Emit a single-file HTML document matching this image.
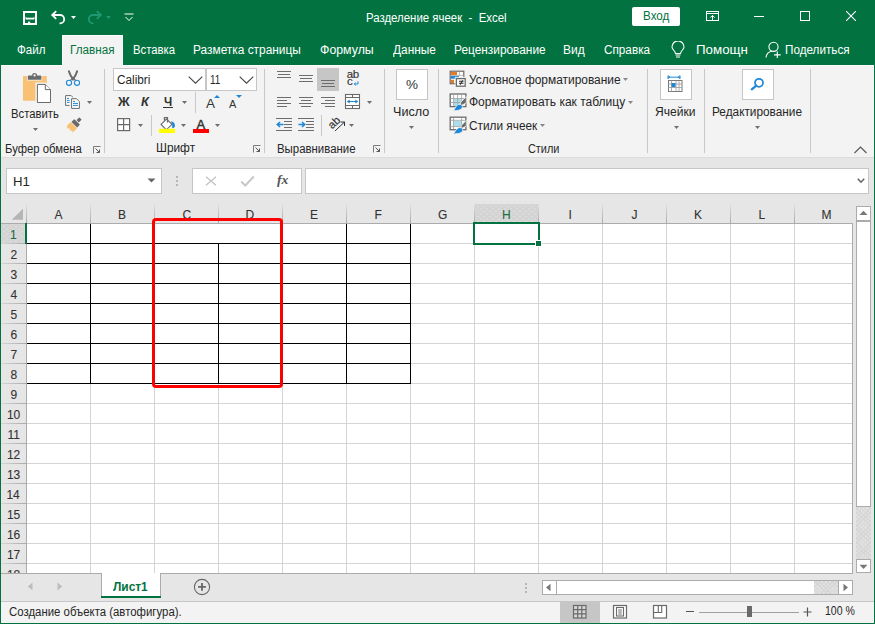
<!DOCTYPE html>
<html><head><meta charset="utf-8"><style>
html,body{margin:0;padding:0;width:875px;height:624px;overflow:hidden;position:relative;font-family:"Liberation Sans",sans-serif;}
body>div,body>span{position:absolute;}
.t{position:absolute;white-space:pre;}
</style></head><body>
<div style="left:0px;top:0px;width:875px;height:624px;background:#027340"></div>
<div style="left:1px;top:65px;width:873px;height:92px;background:#f3f3f3;border-top:1px solid #fcfcfc;box-sizing:border-box"></div>
<div style="left:1px;top:157px;width:873px;height:1px;background:#dcdcdc"></div>
<div style="left:62px;top:35px;width:61px;height:31px;background:#f3f3f3;border-top:1px solid #fcfcfc;border-left:1px solid #fcfcfc;border-right:1px solid #f8f8f8;box-sizing:border-box"></div>
<span class="t" style="left:366.05px;top:11.84px;font-size:12px;line-height:12px;color:#fff;font-weight:400;transform:scaleX(0.9521);transform-origin:0 0;">Разделение ячеек&nbsp; -&nbsp; Excel</span>
<span class="t" style="left:16.50px;top:43.84px;font-size:12px;line-height:12px;color:#fff;font-weight:400;transform:scaleX(0.9621);transform-origin:0 0;">Файл</span>
<span class="t" style="left:132.56px;top:43.84px;font-size:12px;line-height:12px;color:#fff;font-weight:400;transform:scaleX(0.9432);transform-origin:0 0;">Вставка</span>
<span class="t" style="left:193.01px;top:43.84px;font-size:12px;line-height:12px;color:#fff;font-weight:400;transform:scaleX(0.9907);transform-origin:0 0;">Разметка страницы</span>
<span class="t" style="left:320.00px;top:43.84px;font-size:12px;line-height:12px;color:#fff;font-weight:400;transform:scaleX(1.0288);transform-origin:0 0;">Формулы</span>
<span class="t" style="left:392.50px;top:43.84px;font-size:12px;line-height:12px;color:#fff;font-weight:400;transform:scaleX(0.9884);transform-origin:0 0;">Данные</span>
<span class="t" style="left:454.01px;top:43.84px;font-size:12px;line-height:12px;color:#fff;font-weight:400;transform:scaleX(0.9891);transform-origin:0 0;">Рецензирование</span>
<span class="t" style="left:563.00px;top:43.84px;font-size:12px;line-height:12px;color:#fff;font-weight:400;transform:scaleX(1.0000);transform-origin:0 0;">Вид</span>
<span class="t" style="left:604.00px;top:43.84px;font-size:12px;line-height:12px;color:#fff;font-weight:400;transform:scaleX(0.9787);transform-origin:0 0;">Справка</span>
<span class="t" style="left:695.89px;top:43.84px;font-size:12px;line-height:12px;color:#fff;font-weight:400;transform:scaleX(1.1111);transform-origin:0 0;">Помощн</span>
<span class="t" style="left:784.62px;top:43.84px;font-size:12px;line-height:12px;color:#fff;font-weight:400;transform:scaleX(0.9754);transform-origin:0 0;">Поделиться</span>
<span class="t" style="left:69.62px;top:43.84px;font-size:12px;line-height:12px;color:#027340;font-weight:400;transform:scaleX(0.9750);transform-origin:0 0;">Главная</span>
<svg style="position:absolute;left:23px;top:11px" width="14" height="14" viewBox="0 0 14 14"><path d="M1 1H13V13H1Z" fill="none" stroke="#fff" stroke-width="2"/><path d="M2.5 7.6H11.5" stroke="#fff" stroke-width="1.8"/><path d="M2.6 6.3L3.6 7M11.4 6.3L10.4 7" stroke="#fff" stroke-width="1"/><rect x="5" y="10.6" width="2.2" height="2.4" fill="#fff"/></svg>
<svg style="position:absolute;left:50px;top:9px" width="18" height="17" viewBox="0 0 18 17"><path d="M3 6 H10 A4.2 4.2 0 0 1 10 14.4 H9.5" fill="none" stroke="#fff" stroke-width="1.8"/><path d="M6.2 2.2 L2.2 6 L6.2 9.8" fill="none" stroke="#fff" stroke-width="1.8"/></svg>
<svg style="position:absolute;left:71px;top:16px" width="5" height="3" viewBox="0 0 5 3"><path d="M0 0H5L2.5 3Z" fill="#fff"/></svg>
<svg style="position:absolute;left:85px;top:9px" width="18" height="17" viewBox="0 0 18 17"><path d="M15 6 H8 A4.2 4.2 0 0 0 8 14.4 H8.5" fill="none" stroke="#1f9872" stroke-width="1.8"/><path d="M11.8 2.2 L15.8 6 L11.8 9.8" fill="none" stroke="#1f9872" stroke-width="1.8"/></svg>
<svg style="position:absolute;left:106px;top:16px" width="5" height="3" viewBox="0 0 5 3"><path d="M0 0H5L2.5 3Z" fill="#1f9872"/></svg>
<svg style="position:absolute;left:124px;top:13px" width="10" height="9" viewBox="0 0 10 9"><path d="M0.5 1H9.5" stroke="#fff" stroke-width="1"/><path d="M1.5 4 L5 7.5 L8.5 4" fill="none" stroke="#fff" stroke-width="1"/></svg>
<div style="left:632px;top:7px;width:48px;height:19px;background:#fff;border-radius:2px"></div>
<span class="t" style="left:642.63px;top:9.84px;font-size:12px;line-height:12px;color:#027340;font-weight:400;transform:scaleX(0.9692);transform-origin:0 0;">Вход</span>
<svg style="position:absolute;left:705px;top:10px" width="15" height="12" viewBox="0 0 15 12"><rect x="1.5" y="1.5" width="12" height="9" fill="none" stroke="#fff" stroke-width="1"/><path d="M1.5 3.5H13.5" stroke="#fff" stroke-width="1"/><path d="M7.5 10V5.5M5.3 7.6L7.5 5.4L9.7 7.6" fill="none" stroke="#fff" stroke-width="1"/></svg>
<div style="left:754px;top:16px;width:10px;height:1px;background:#fff"></div>
<svg style="position:absolute;left:800px;top:11px" width="10" height="10" viewBox="0 0 10 10"><rect x="0.5" y="0.5" width="9" height="9" fill="none" stroke="#fff" stroke-width="1"/></svg>
<svg style="position:absolute;left:846px;top:11px" width="10" height="10" viewBox="0 0 10 10"><path d="M0 0L10 10M10 0L0 10" stroke="#fff" stroke-width="1.1"/></svg>
<svg style="position:absolute;left:670px;top:41px" width="16" height="18" viewBox="0 0 16 18"><path d="M5.5 12.5 C5.5 10 2 8.5 2 6 A6 6 0 0 1 14 6 C14 8.5 10.5 10 10.5 12.5 Z" fill="none" stroke="#fff" stroke-width="1.1"/><path d="M5.5 14H10.5M6 16H10" stroke="#fff" stroke-width="1.1"/></svg>
<svg style="position:absolute;left:765px;top:41px" width="17" height="18" viewBox="0 0 17 18"><circle cx="8.5" cy="5.8" r="4.6" fill="none" stroke="#fff" stroke-width="1.1"/><path d="M1 16.5 C1.5 12.5 4 10.5 7 10.2" fill="none" stroke="#fff" stroke-width="1.1"/><path d="M12.3 10.5V17M9 13.8H15.7" stroke="#fff" stroke-width="1.2"/></svg>
<div style="left:104px;top:69px;width:1px;height:84px;background:#c8c8c8"></div>
<div style="left:264px;top:69px;width:1px;height:84px;background:#c8c8c8"></div>
<div style="left:384px;top:69px;width:1px;height:84px;background:#c8c8c8"></div>
<div style="left:438px;top:69px;width:1px;height:84px;background:#c8c8c8"></div>
<div style="left:647px;top:69px;width:1px;height:84px;background:#c8c8c8"></div>
<div style="left:704px;top:69px;width:1px;height:84px;background:#c8c8c8"></div>
<div style="left:810px;top:69px;width:1px;height:84px;background:#c8c8c8"></div>
<span class="t" style="left:5.46px;top:142.84px;font-size:12px;line-height:12px;color:#262626;font-weight:400;transform:scaleX(0.9407);transform-origin:0 0;">Буфер обмена</span>
<svg style="position:absolute;left:93px;top:146px" width="8" height="8" viewBox="0 0 8 8"><path d="M0.5 7.5V0.5H7.5" fill="none" stroke="#7a7a7a" stroke-width="1"/><path d="M2.5 2.5L6.5 6.5M3.5 6.5H6.5V3.5" fill="none" stroke="#555" stroke-width="1"/></svg>
<span class="t" style="left:156.01px;top:142.44px;font-size:12px;line-height:12px;color:#262626;font-weight:400;transform:scaleX(0.9897);transform-origin:0 0;">Шрифт</span>
<svg style="position:absolute;left:253px;top:145px" width="8" height="8" viewBox="0 0 8 8"><path d="M0.5 7.5V0.5H7.5" fill="none" stroke="#7a7a7a" stroke-width="1"/><path d="M2.5 2.5L6.5 6.5M3.5 6.5H6.5V3.5" fill="none" stroke="#555" stroke-width="1"/></svg>
<span class="t" style="left:276.65px;top:142.64px;font-size:12px;line-height:12px;color:#262626;font-weight:400;transform:scaleX(0.9500);transform-origin:0 0;">Выравнивание</span>
<svg style="position:absolute;left:373px;top:145px" width="8" height="8" viewBox="0 0 8 8"><path d="M0.5 7.5V0.5H7.5" fill="none" stroke="#7a7a7a" stroke-width="1"/><path d="M2.5 2.5L6.5 6.5M3.5 6.5H6.5V3.5" fill="none" stroke="#555" stroke-width="1"/></svg>
<span class="t" style="left:527.70px;top:142.74px;font-size:12px;line-height:12px;color:#262626;font-weight:400;transform:scaleX(0.9059);transform-origin:0 0;">Стили</span>
<svg style="position:absolute;left:854px;top:146px" width="13" height="8" viewBox="0 0 13 8"><path d="M0.5 7L6.5 1L12.5 7" fill="none" stroke="#555" stroke-width="1.1"/></svg>
<svg style="position:absolute;left:18px;top:68px" width="40" height="40" viewBox="0 0 40 40"><rect x="5" y="8" width="23.8" height="24.7" fill="#f8c173"/><path d="M9.8 11.8V8.4Q9.8 7.6 10.6 7.6H14.2V6.6Q14.2 5 16.6 5Q19 5 19 6.6V7.6H22.6Q23.4 7.6 23.4 8.4V11.8Z" fill="#6a6a6a" stroke="#f8f8f8" stroke-width="1.6" paint-order="stroke"/><circle cx="16.6" cy="7.4" r="1.1" fill="#fff"/><path d="M18.4 15.4H27.5L33.5 21.3V35.5H18.4Z" fill="#fff" stroke="#f3f3f3" stroke-width="2"/><path d="M19.4 16.4H27.3L32.5 21.6V34.5H19.4Z" fill="#fff" stroke="#6a6a6a" stroke-width="1"/><path d="M27.3 16.4V21.6H32.5" fill="#fff" stroke="#6a6a6a" stroke-width="1"/></svg>
<span class="t" style="left:10.86px;top:107.54px;font-size:12px;line-height:12px;color:#262626;font-weight:400;transform:scaleX(0.9400);transform-origin:0 0;">Вставить</span>
<svg style="position:absolute;left:33px;top:128px" width="5" height="3" viewBox="0 0 5 3"><path d="M0 0H5L2.5 3Z" fill="#6e6e6e"/></svg>
<svg style="position:absolute;left:62px;top:68px" width="18" height="20" viewBox="0 0 18 20"><path d="M6.9 3.3Q8 7.5 11.3 11.4M15.1 3.3Q14 7.5 10.7 11.4" fill="none" stroke="#6a6a6a" stroke-width="2" stroke-linecap="round"/><path d="M8.3 12.6L10.6 9.8M13.7 12.6L11.4 9.8" stroke="#6a6a6a" stroke-width="1.2"/><circle cx="7" cy="14.8" r="2.6" fill="none" stroke="#1e88d6" stroke-width="1.1"/><circle cx="15" cy="14.8" r="2.6" fill="none" stroke="#1e88d6" stroke-width="1.1"/></svg>
<svg style="position:absolute;left:62px;top:92px" width="20" height="20" viewBox="0 0 20 20"><path d="M3.6 3.6H9.2L10.6 5V13.4H3.6Z" fill="#fff" stroke="#6a6a6a" stroke-width="1"/><path d="M5 6.4H7M5 8.4H8M5 10.4H8" stroke="#1e88d6" stroke-width="1"/><path d="M8.6 6.2H14.5L17.5 9.2V16.5H8.6Z" fill="#fff" stroke="#f3f3f3" stroke-width="2"/><path d="M9.6 6.7H14.5L17.4 9.6V16.4H9.6Z" fill="#fff" stroke="#6a6a6a" stroke-width="1"/><path d="M11 9.4H13M11 11.4H16M11 13.4H16" stroke="#1e88d6" stroke-width="1"/></svg>
<svg style="position:absolute;left:87px;top:101px" width="5" height="3" viewBox="0 0 5 3"><path d="M0 0H5L2.5 3Z" fill="#6e6e6e"/></svg>
<svg style="position:absolute;left:62px;top:113px" width="24" height="24" viewBox="0 0 24 24"><g transform="rotate(45 12 12)"><rect x="10.3" y="2.8" width="3.4" height="4" rx="0.6" fill="#6a6a6a"/><rect x="8" y="7.6" width="8" height="4" rx="0.5" fill="#6a6a6a"/><path d="M7.6 12.2H16.4V18.6L14.8 17.2L13.2 19L11.5 17.4L9.8 19.2L7.6 17.6Z" fill="#f8c173"/></g></svg>
<div style="left:113px;top:68px;width:93px;height:23px;background:#fff;border:1px solid #c6c6c6;box-sizing:border-box"></div>
<div style="left:206px;top:68px;width:51px;height:23px;background:#fff;border:1px solid #c6c6c6;box-sizing:border-box"></div>
<span class="t" style="left:116.50px;top:74.22px;font-size:12.5px;line-height:12.5px;color:#262626;font-weight:400;transform:scaleX(0.9429);transform-origin:0 0;">Calibri</span>
<span class="t" style="left:209.71px;top:74.22px;font-size:12.5px;line-height:12.5px;color:#262626;font-weight:400;transform:scaleX(0.7917);transform-origin:0 0;">11</span>
<svg style="position:absolute;left:188px;top:76px" width="15" height="8" viewBox="0 0 15 8"><path d="M0.7 0.7L7.5 7.2L14.3 0.7" fill="none" stroke="#444" stroke-width="1.1"/></svg>
<svg style="position:absolute;left:239px;top:76px" width="15" height="8" viewBox="0 0 15 8"><path d="M0.7 0.7L7.5 7.2L14.3 0.7" fill="none" stroke="#444" stroke-width="1.1"/></svg>
<span class="t" style="left:118.00px;top:95.84px;font-size:12px;line-height:12px;color:#333;font-weight:700;transform:scaleX(1.0727);transform-origin:0 0;">Ж</span>
<span class="t" style="left:141.00px;top:95.84px;font-size:12px;line-height:12px;color:#333;font-weight:700;transform:scaleX(1.0625);transform-origin:0 0;font-style:italic">К</span>
<span class="t" style="left:163.60px;top:95.84px;font-size:12px;line-height:12px;color:#333;font-weight:700;transform:scaleX(0.9750);transform-origin:0 0;">Ч</span>
<div style="left:163px;top:107px;width:10px;height:1px;background:#333"></div>
<svg style="position:absolute;left:182px;top:101px" width="5" height="3" viewBox="0 0 5 3"><path d="M0 0H5L2.5 3Z" fill="#6e6e6e"/></svg>
<div style="left:195px;top:92px;width:1px;height:21px;background:#c8c8c8"></div>
<span class="t" style="left:206.00px;top:96.57px;font-size:13.5px;line-height:13.5px;color:#333;font-weight:400;">A</span>
<svg style="position:absolute;left:213.5px;top:95px" width="6" height="3" viewBox="0 0 6 3"><path d="M0 3H6L3 0Z" fill="#1e88d6"/></svg>
<span class="t" style="left:229.00px;top:98.69px;font-size:11px;line-height:11px;color:#333;font-weight:400;">A</span>
<svg style="position:absolute;left:235.5px;top:95px" width="6" height="3" viewBox="0 0 6 3"><path d="M0 0H6L3 3Z" fill="#1e88d6"/></svg>
<svg style="position:absolute;left:117px;top:118px" width="14" height="14" viewBox="0 0 14 14"><rect x="0.6" y="0.6" width="12" height="12" fill="#fff" stroke="#6a6a6a" stroke-width="1.2"/><path d="M6.6 0.6V12.6M0.6 6.6H12.6" stroke="#6a6a6a" stroke-width="1.2"/></svg>
<svg style="position:absolute;left:138px;top:124px" width="5" height="3" viewBox="0 0 5 3"><path d="M0 0H5L2.5 3Z" fill="#6e6e6e"/></svg>
<div style="left:151px;top:115px;width:1px;height:21px;background:#c8c8c8"></div>
<svg style="position:absolute;left:156px;top:114px" width="24" height="22" viewBox="0 0 24 22"><path d="M5.1 10.4L10.5 5L16 10.3L10.3 15.8Z" fill="#fff" stroke="#6a6a6a" stroke-width="1.1"/><path d="M8.4 6.5V3.6H11.5V8.5" fill="none" stroke="#6a6a6a" stroke-width="1.2"/><path d="M15 7.2C17.6 7.6 19.4 9.6 18.9 12.2C18.5 14 16.8 14.7 16.2 13.4C15.9 12.3 16.6 11.2 16.2 10.3Z" fill="#1e88d6"/><rect x="3" y="14.8" width="16" height="4.2" fill="#ffff00"/></svg>
<svg style="position:absolute;left:181px;top:124px" width="5" height="3" viewBox="0 0 5 3"><path d="M0 0H5L2.5 3Z" fill="#6e6e6e"/></svg>
<span class="t" style="left:196.50px;top:117.80px;font-size:13px;line-height:13px;color:#333;font-weight:400;-webkit-text-stroke:0.45px currentColor">A</span>
<div style="left:193px;top:129px;width:16px;height:4px;background:#ff0000"></div>
<svg style="position:absolute;left:215px;top:124px" width="5" height="3" viewBox="0 0 5 3"><path d="M0 0H5L2.5 3Z" fill="#6e6e6e"/></svg>
<div style="left:317px;top:68px;width:22px;height:23px;background:#c6c6c6"></div>
<div style="left:277px;top:71px;width:14px;height:1px;background:#6d6d6d"></div>
<div style="left:278px;top:74px;width:12px;height:1px;background:#6d6d6d"></div>
<div style="left:277px;top:77px;width:14px;height:1px;background:#6d6d6d"></div>
<div style="left:299px;top:75px;width:14px;height:1px;background:#6d6d6d"></div>
<div style="left:300px;top:78px;width:12px;height:1px;background:#6d6d6d"></div>
<div style="left:299px;top:81px;width:14px;height:1px;background:#6d6d6d"></div>
<div style="left:321px;top:80px;width:14px;height:1px;background:#6d6d6d"></div>
<div style="left:322px;top:83px;width:12px;height:1px;background:#6d6d6d"></div>
<div style="left:321px;top:86px;width:14px;height:1px;background:#6d6d6d"></div>
<div style="left:277px;top:97px;width:14px;height:1px;background:#6d6d6d"></div>
<div style="left:277px;top:100px;width:10px;height:1px;background:#6d6d6d"></div>
<div style="left:277px;top:103px;width:14px;height:1px;background:#6d6d6d"></div>
<div style="left:277px;top:106px;width:10px;height:1px;background:#6d6d6d"></div>
<div style="left:299px;top:97px;width:14px;height:1px;background:#6d6d6d"></div>
<div style="left:301px;top:100px;width:10px;height:1px;background:#6d6d6d"></div>
<div style="left:299px;top:103px;width:14px;height:1px;background:#6d6d6d"></div>
<div style="left:301px;top:106px;width:10px;height:1px;background:#6d6d6d"></div>
<div style="left:321px;top:97px;width:14px;height:1px;background:#6d6d6d"></div>
<div style="left:325px;top:100px;width:10px;height:1px;background:#6d6d6d"></div>
<div style="left:321px;top:103px;width:14px;height:1px;background:#6d6d6d"></div>
<div style="left:325px;top:106px;width:10px;height:1px;background:#6d6d6d"></div>
<span class="t" style="left:346.70px;top:69.47px;font-size:11.5px;line-height:11.5px;color:#333;font-weight:400;letter-spacing:-0.3px;-webkit-text-stroke:0.15px currentColor">ab</span>
<span class="t" style="left:347.00px;top:76.27px;font-size:11.5px;line-height:11.5px;color:#333;font-weight:400;-webkit-text-stroke:0.15px currentColor">c</span>
<svg style="position:absolute;left:353px;top:81px" width="6" height="5" viewBox="0 0 6 5"><path d="M5 0.3V3H1.5M2.8 1.6L1.2 3L2.8 4.4" fill="none" stroke="#1e88d6" stroke-width="1"/></svg>
<svg style="position:absolute;left:344px;top:93px" width="17" height="17" viewBox="0 0 17 17"><rect x="1.5" y="1.5" width="14" height="14" fill="#fff" stroke="#6a6a6a" stroke-width="1.1"/><path d="M1.5 4.5H15.5M1.5 12.5H15.5M8.5 1.5V4.5M8.5 12.5V15.5" stroke="#6a6a6a" stroke-width="1.1"/><path d="M3.5 8.5H13.5" stroke="#1e88d6" stroke-width="1"/><path d="M3.2 8.5L5.4 7V10ZM13.8 8.5L11.6 7V10Z" fill="#1e88d6" stroke="#1e88d6" stroke-width="0.6"/></svg>
<svg style="position:absolute;left:367px;top:101px" width="5" height="3" viewBox="0 0 5 3"><path d="M0 0H5L2.5 3Z" fill="#6e6e6e"/></svg>
<div style="left:276px;top:118px;width:16px;height:1px;background:#6d6d6d"></div>
<div style="left:284px;top:121px;width:8px;height:1px;background:#6d6d6d"></div>
<div style="left:284px;top:124px;width:8px;height:1px;background:#6d6d6d"></div>
<div style="left:284px;top:127px;width:8px;height:1px;background:#6d6d6d"></div>
<div style="left:276px;top:130px;width:16px;height:1px;background:#6d6d6d"></div>
<svg style="position:absolute;left:276px;top:121px" width="8" height="7" viewBox="0 0 8 7"><path d="M7.5 3.5H1.5M4 1L1.3 3.5L4 6" fill="none" stroke="#1e88d6" stroke-width="1.6"/></svg>
<div style="left:298px;top:118px;width:16px;height:1px;background:#6d6d6d"></div>
<div style="left:306px;top:121px;width:8px;height:1px;background:#6d6d6d"></div>
<div style="left:306px;top:124px;width:8px;height:1px;background:#6d6d6d"></div>
<div style="left:306px;top:127px;width:8px;height:1px;background:#6d6d6d"></div>
<div style="left:298px;top:130px;width:16px;height:1px;background:#6d6d6d"></div>
<svg style="position:absolute;left:298px;top:121px" width="8" height="7" viewBox="0 0 8 7"><path d="M0.5 3.5H6.5M4 1L6.7 3.5L4 6" fill="none" stroke="#1e88d6" stroke-width="1.6"/></svg>
<div style="left:321px;top:115px;width:1px;height:21px;background:#c8c8c8"></div>
<span class="t" style="left:327.5px;top:113px;font-size:11px;line-height:12px;color:#333;-webkit-text-stroke:0.2px #333;transform:rotate(-45deg);transform-origin:10px 8px">ab</span>
<svg style="position:absolute;left:334px;top:121px" width="12" height="11" viewBox="0 0 12 11"><path d="M1 10L10.5 1M6.5 1H10.5V5" fill="none" stroke="#333" stroke-width="1"/></svg>
<svg style="position:absolute;left:349px;top:124px" width="5" height="3" viewBox="0 0 5 3"><path d="M0 0H5L2.5 3Z" fill="#6e6e6e"/></svg>
<div style="left:396px;top:69px;width:32px;height:31px;background:#fff;border:1px solid #c6c6c6;box-sizing:border-box"></div>
<span class="t" style="left:406.00px;top:78.27px;font-size:13.5px;line-height:13.5px;color:#333;font-weight:400;">%</span>
<span class="t" style="left:393.35px;top:105.64px;font-size:12px;line-height:12px;color:#262626;font-weight:400;transform:scaleX(1.0485);transform-origin:0 0;">Число</span>
<svg style="position:absolute;left:409px;top:126px" width="5" height="3" viewBox="0 0 5 3"><path d="M0 0H5L2.5 3Z" fill="#6e6e6e"/></svg>
<svg style="position:absolute;left:449px;top:70px" width="18" height="18" viewBox="0 0 18 18"><rect x="1.2" y="1.2" width="13.6" height="12.5" fill="#fff" stroke="#6a6a6a" stroke-width="1.2"/><rect x="1.8" y="1.8" width="6.2" height="3.2" fill="#e07b27"/><path d="M1.8 6H10.2L9 8.8H1.8Z" fill="#1e88d6"/><rect x="1.8" y="9.8" width="3.2" height="3.4" fill="#e07b27"/><path d="M10.4 1.8V5.4M1.8 5.4H14.2" stroke="#b0b0b0" stroke-width="0.9"/><rect x="6.3" y="7.4" width="11" height="10" fill="none" stroke="#f3f3f3" stroke-width="1"/><rect x="7.4" y="8.6" width="8.8" height="7.6" fill="#fff" stroke="#6a6a6a" stroke-width="1.3"/><path d="M10 11.3H14.6M10 13.3H14.6M13.8 10.2L11.1 14.6" stroke="#333" stroke-width="1.1"/></svg>
<svg style="position:absolute;left:449px;top:92px" width="20" height="21" viewBox="0 0 20 21"><rect x="1.2" y="2" width="15.7" height="12.6" fill="#fff" stroke="#6a6a6a" stroke-width="1.3"/><rect x="5" y="6.9" width="7.2" height="7.2" fill="#a9dfe9"/><path d="M4.6 2.6V14M8.6 2.6V14M12.7 2.6V14M1.8 6.5H16.3M1.8 10.5H16.3" stroke="#a6a6a6" stroke-width="0.9"/><path d="M17.3 4.6L17.3 10.8L11.2 14.2L11.8 10.2Z" fill="#6a6a6a" stroke="#f3f3f3" stroke-width="0.8"/><path d="M4.6 18.6L7.6 13.6Q10 11.4 12.2 12.6Q14.3 14 13 16.6Q10.6 18.8 5 18.8Z" fill="#1e88d6" stroke="#f3f3f3" stroke-width="0.8"/></svg>
<svg style="position:absolute;left:449px;top:114px" width="20" height="21" viewBox="0 0 20 21"><rect x="1.2" y="3.2" width="15.7" height="12.5" fill="#fff" stroke="#6a6a6a" stroke-width="1.3"/><rect x="4.9" y="6.8" width="7.3" height="5.4" fill="#a9dfe9"/><path d="M4.5 3.8V15M12.6 3.8V15M1.8 6.3H16.3M1.8 12.6H16.3" stroke="#a6a6a6" stroke-width="0.9"/><path d="M17.3 6.3L17.3 12L12.3 14.6L12.3 11.4Z" fill="#6a6a6a" stroke="#f3f3f3" stroke-width="0.8"/><path d="M4.6 19.6L7.8 15Q10.2 12.6 12.6 13.8Q14.6 15.2 13.2 18Q10.8 19.9 5 19.9Z" fill="#1e88d6" stroke="#f3f3f3" stroke-width="0.8"/></svg>
<span class="t" style="left:468.90px;top:74.04px;font-size:12px;line-height:12px;color:#262626;font-weight:400;transform:scaleX(0.9928);transform-origin:0 0;">Условное форматирование</span>
<span class="t" style="left:469.00px;top:96.04px;font-size:12px;line-height:12px;color:#262626;font-weight:400;transform:scaleX(1.0000);transform-origin:0 0;">Форматировать как таблицу</span>
<span class="t" style="left:469.00px;top:119.64px;font-size:12px;line-height:12px;color:#262626;font-weight:400;transform:scaleX(0.9855);transform-origin:0 0;">Стили ячеек</span>
<svg style="position:absolute;left:623px;top:78px" width="5" height="3" viewBox="0 0 5 3"><path d="M0 0H5L2.5 3Z" fill="#888"/></svg>
<svg style="position:absolute;left:628px;top:101px" width="5" height="3" viewBox="0 0 5 3"><path d="M0 0H5L2.5 3Z" fill="#888"/></svg>
<svg style="position:absolute;left:540px;top:124px" width="5" height="3" viewBox="0 0 5 3"><path d="M0 0H5L2.5 3Z" fill="#888"/></svg>
<div style="left:660px;top:69px;width:32px;height:31px;background:#fff;border:1px solid #c6c6c6;box-sizing:border-box"></div>
<svg style="position:absolute;left:667px;top:75px" width="17" height="18" viewBox="0 0 17 18"><path d="M1 2.2H13M1 0.5V4M13 0.5V4M3 2.2L1.3 0.9M3 2.2L1.3 3.5M11 2.2L12.7 0.9M11 2.2L12.7 3.5" stroke="#1e88d6" stroke-width="1"/><rect x="1.5" y="5.5" width="13.5" height="11" fill="#fff" stroke="#7a7a7a" stroke-width="1"/><path d="M1.5 9H15M1.5 12.5H15M4.5 5.5V16.5M9 5.5V16.5M12 5.5V16.5" stroke="#9a9a9a" stroke-width="0.8"/><rect x="4.5" y="8" width="4" height="4" fill="#1e88d6"/></svg>
<span class="t" style="left:655.19px;top:105.84px;font-size:12px;line-height:12px;color:#262626;font-weight:400;transform:scaleX(1.0051);transform-origin:0 0;">Ячейки</span>
<svg style="position:absolute;left:674px;top:126px" width="5" height="3" viewBox="0 0 5 3"><path d="M0 0H5L2.5 3Z" fill="#6e6e6e"/></svg>
<div style="left:742px;top:69px;width:32px;height:31px;background:#fff;border:1px solid #c6c6c6;box-sizing:border-box"></div>
<svg style="position:absolute;left:750px;top:76px" width="16" height="16" viewBox="0 0 16 16"><circle cx="9" cy="6.8" r="4" fill="none" stroke="#1e88d6" stroke-width="1.7"/><path d="M6.3 9.6L1.8 13.4" stroke="#1e88d6" stroke-width="2.2" stroke-linecap="round"/></svg>
<span class="t" style="left:712.42px;top:105.84px;font-size:12px;line-height:12px;color:#262626;font-weight:400;transform:scaleX(0.9844);transform-origin:0 0;">Редактирование</span>
<svg style="position:absolute;left:755px;top:126px" width="5" height="3" viewBox="0 0 5 3"><path d="M0 0H5L2.5 3Z" fill="#6e6e6e"/></svg>
<div style="left:1px;top:158px;width:873px;height:46px;background:#e6e6e6"></div>
<div style="left:6px;top:168px;width:156px;height:26px;background:#fff;border:1px solid #c6c6c6;box-sizing:border-box"></div>
<span class="t" style="left:12.60px;top:175.84px;font-size:12px;line-height:12px;color:#262626;font-weight:400;transform:scaleX(1.1000);transform-origin:0 0;">H1</span>
<svg style="position:absolute;left:147px;top:178px" width="9" height="5" viewBox="0 0 9 5"><path d="M0.5 0.5H8.5L4.5 4.5Z" fill="#666"/></svg>
<div style="left:176px;top:175.6px;width:2px;height:2px;background:#a6a6a6;border-radius:1px"></div>
<div style="left:176px;top:179.6px;width:2px;height:2px;background:#a6a6a6;border-radius:1px"></div>
<div style="left:176px;top:183.6px;width:2px;height:2px;background:#a6a6a6;border-radius:1px"></div>
<div style="left:192px;top:168px;width:110px;height:26px;background:#fff;border:1px solid #c6c6c6;box-sizing:border-box"></div>
<svg style="position:absolute;left:205px;top:176px" width="12" height="10" viewBox="0 0 12 10"><path d="M1 0.8L11 9.2M11 0.8L1 9.2" stroke="#c4c4c4" stroke-width="1.4"/></svg>
<svg style="position:absolute;left:240px;top:175px" width="15" height="12" viewBox="0 0 15 12"><path d="M1.2 6.5L5.3 10.5L13.8 1.5" fill="none" stroke="#c8c8c8" stroke-width="2"/></svg>
<span class="t" style="left:277.30px;top:173.84px;font-size:12px;line-height:12px;color:#555;font-weight:700;transform:scaleX(1.1400);transform-origin:0 0;font-family:'Liberation Serif';font-style:italic">fx</span>
<div style="left:305px;top:168px;width:564px;height:26px;background:#fff;border:1px solid #c6c6c6;box-sizing:border-box"></div>
<svg style="position:absolute;left:857px;top:178px" width="8" height="6" viewBox="0 0 8 6"><path d="M0.8 0.8L4 4.2L7.2 0.8" fill="none" stroke="#666" stroke-width="1.6"/></svg>
<div style="left:1px;top:204px;width:852px;height:20px;background:#e6e6e6"></div>
<div style="left:1px;top:224px;width:26px;height:349px;background:#e6e6e6"></div>
<div style="left:27px;top:224px;width:826px;height:349px;background:#fff"></div>
<div style="left:475px;top:204px;width:63px;height:19px;background-color:#d4d4d4;background-image:radial-gradient(circle,#e0e0e0 0.5px,transparent 0.9px),radial-gradient(circle,#e0e0e0 0.5px,transparent 0.9px);background-size:6px 5px;background-position:0 0,3px 2.5px"></div>
<div style="left:1px;top:224px;width:25px;height:19px;background-color:#d4d4d4;background-image:radial-gradient(circle,#e0e0e0 0.5px,transparent 0.9px),radial-gradient(circle,#e0e0e0 0.5px,transparent 0.9px);background-size:6px 5px;background-position:0 0,3px 2.5px"></div>
<div style="left:27px;top:243px;width:826px;height:1px;background:#d4d4d4"></div>
<div style="left:1px;top:243px;width:25px;height:1px;background:linear-gradient(90deg,#d8d8d8,#a8a8a8)"></div>
<div style="left:27px;top:263px;width:826px;height:1px;background:#d4d4d4"></div>
<div style="left:1px;top:263px;width:25px;height:1px;background:linear-gradient(90deg,#d8d8d8,#a8a8a8)"></div>
<div style="left:27px;top:283px;width:826px;height:1px;background:#d4d4d4"></div>
<div style="left:1px;top:283px;width:25px;height:1px;background:linear-gradient(90deg,#d8d8d8,#a8a8a8)"></div>
<div style="left:27px;top:303px;width:826px;height:1px;background:#d4d4d4"></div>
<div style="left:1px;top:303px;width:25px;height:1px;background:linear-gradient(90deg,#d8d8d8,#a8a8a8)"></div>
<div style="left:27px;top:323px;width:826px;height:1px;background:#d4d4d4"></div>
<div style="left:1px;top:323px;width:25px;height:1px;background:linear-gradient(90deg,#d8d8d8,#a8a8a8)"></div>
<div style="left:27px;top:343px;width:826px;height:1px;background:#d4d4d4"></div>
<div style="left:1px;top:343px;width:25px;height:1px;background:linear-gradient(90deg,#d8d8d8,#a8a8a8)"></div>
<div style="left:27px;top:363px;width:826px;height:1px;background:#d4d4d4"></div>
<div style="left:1px;top:363px;width:25px;height:1px;background:linear-gradient(90deg,#d8d8d8,#a8a8a8)"></div>
<div style="left:27px;top:383px;width:826px;height:1px;background:#d4d4d4"></div>
<div style="left:1px;top:383px;width:25px;height:1px;background:linear-gradient(90deg,#d8d8d8,#a8a8a8)"></div>
<div style="left:27px;top:403px;width:826px;height:1px;background:#d4d4d4"></div>
<div style="left:1px;top:403px;width:25px;height:1px;background:linear-gradient(90deg,#d8d8d8,#a8a8a8)"></div>
<div style="left:27px;top:423px;width:826px;height:1px;background:#d4d4d4"></div>
<div style="left:1px;top:423px;width:25px;height:1px;background:linear-gradient(90deg,#d8d8d8,#a8a8a8)"></div>
<div style="left:27px;top:443px;width:826px;height:1px;background:#d4d4d4"></div>
<div style="left:1px;top:443px;width:25px;height:1px;background:linear-gradient(90deg,#d8d8d8,#a8a8a8)"></div>
<div style="left:27px;top:463px;width:826px;height:1px;background:#d4d4d4"></div>
<div style="left:1px;top:463px;width:25px;height:1px;background:linear-gradient(90deg,#d8d8d8,#a8a8a8)"></div>
<div style="left:27px;top:483px;width:826px;height:1px;background:#d4d4d4"></div>
<div style="left:1px;top:483px;width:25px;height:1px;background:linear-gradient(90deg,#d8d8d8,#a8a8a8)"></div>
<div style="left:27px;top:503px;width:826px;height:1px;background:#d4d4d4"></div>
<div style="left:1px;top:503px;width:25px;height:1px;background:linear-gradient(90deg,#d8d8d8,#a8a8a8)"></div>
<div style="left:27px;top:523px;width:826px;height:1px;background:#d4d4d4"></div>
<div style="left:1px;top:523px;width:25px;height:1px;background:linear-gradient(90deg,#d8d8d8,#a8a8a8)"></div>
<div style="left:27px;top:543px;width:826px;height:1px;background:#d4d4d4"></div>
<div style="left:1px;top:543px;width:25px;height:1px;background:linear-gradient(90deg,#d8d8d8,#a8a8a8)"></div>
<div style="left:27px;top:563px;width:826px;height:1px;background:#d4d4d4"></div>
<div style="left:1px;top:563px;width:25px;height:1px;background:linear-gradient(90deg,#d8d8d8,#a8a8a8)"></div>
<div style="left:90px;top:224px;width:1px;height:349px;background:#d4d4d4"></div>
<div style="left:90px;top:204px;width:1px;height:19px;background:linear-gradient(#e0e0e0,#a8a8a8)"></div>
<div style="left:154px;top:224px;width:1px;height:349px;background:#d4d4d4"></div>
<div style="left:154px;top:204px;width:1px;height:19px;background:linear-gradient(#e0e0e0,#a8a8a8)"></div>
<div style="left:218px;top:224px;width:1px;height:349px;background:#d4d4d4"></div>
<div style="left:218px;top:204px;width:1px;height:19px;background:linear-gradient(#e0e0e0,#a8a8a8)"></div>
<div style="left:282px;top:224px;width:1px;height:349px;background:#d4d4d4"></div>
<div style="left:282px;top:204px;width:1px;height:19px;background:linear-gradient(#e0e0e0,#a8a8a8)"></div>
<div style="left:346px;top:224px;width:1px;height:349px;background:#d4d4d4"></div>
<div style="left:346px;top:204px;width:1px;height:19px;background:linear-gradient(#e0e0e0,#a8a8a8)"></div>
<div style="left:410px;top:224px;width:1px;height:349px;background:#d4d4d4"></div>
<div style="left:410px;top:204px;width:1px;height:19px;background:linear-gradient(#e0e0e0,#a8a8a8)"></div>
<div style="left:474px;top:224px;width:1px;height:349px;background:#d4d4d4"></div>
<div style="left:474px;top:204px;width:1px;height:19px;background:linear-gradient(#e0e0e0,#a8a8a8)"></div>
<div style="left:538px;top:224px;width:1px;height:349px;background:#d4d4d4"></div>
<div style="left:538px;top:204px;width:1px;height:19px;background:linear-gradient(#e0e0e0,#a8a8a8)"></div>
<div style="left:602px;top:224px;width:1px;height:349px;background:#d4d4d4"></div>
<div style="left:602px;top:204px;width:1px;height:19px;background:linear-gradient(#e0e0e0,#a8a8a8)"></div>
<div style="left:666px;top:224px;width:1px;height:349px;background:#d4d4d4"></div>
<div style="left:666px;top:204px;width:1px;height:19px;background:linear-gradient(#e0e0e0,#a8a8a8)"></div>
<div style="left:730px;top:224px;width:1px;height:349px;background:#d4d4d4"></div>
<div style="left:730px;top:204px;width:1px;height:19px;background:linear-gradient(#e0e0e0,#a8a8a8)"></div>
<div style="left:794px;top:224px;width:1px;height:349px;background:#d4d4d4"></div>
<div style="left:794px;top:204px;width:1px;height:19px;background:linear-gradient(#e0e0e0,#a8a8a8)"></div>
<div style="left:26px;top:204px;width:1px;height:19px;background:linear-gradient(#e0e0e0,#a8a8a8)"></div>
<div style="left:26px;top:224px;width:1px;height:349px;background:#ababab"></div>
<div style="left:1px;top:223px;width:852px;height:1px;background:#ababab"></div>
<div style="left:852px;top:223px;width:1px;height:350px;background:#ababab"></div>
<div style="left:25px;top:223px;width:2px;height:21px;background:#027340"></div>
<svg style="position:absolute;left:11px;top:208px" width="13" height="13" viewBox="0 0 13 13"><path d="M12 0.7V11.7H0.7Z" fill="#b5b5b5"/></svg>
<span class="t" style="left:54.50px;top:208.84px;font-size:12px;line-height:12px;color:#333;font-weight:400;-webkit-text-stroke:0.1px currentColor">A</span>
<span class="t" style="left:118.00px;top:208.84px;font-size:12px;line-height:12px;color:#333;font-weight:400;-webkit-text-stroke:0.1px currentColor">B</span>
<span class="t" style="left:182.50px;top:208.84px;font-size:12px;line-height:12px;color:#333;font-weight:400;-webkit-text-stroke:0.1px currentColor">C</span>
<span class="t" style="left:245.50px;top:208.84px;font-size:12px;line-height:12px;color:#333;font-weight:400;-webkit-text-stroke:0.1px currentColor">D</span>
<span class="t" style="left:310.00px;top:208.84px;font-size:12px;line-height:12px;color:#333;font-weight:400;-webkit-text-stroke:0.1px currentColor">E</span>
<span class="t" style="left:374.50px;top:208.84px;font-size:12px;line-height:12px;color:#333;font-weight:400;-webkit-text-stroke:0.1px currentColor">F</span>
<span class="t" style="left:438.00px;top:208.84px;font-size:12px;line-height:12px;color:#333;font-weight:400;-webkit-text-stroke:0.1px currentColor">G</span>
<span class="t" style="left:502.00px;top:208.84px;font-size:12px;line-height:12px;color:#1d6b40;font-weight:400;-webkit-text-stroke:0.1px currentColor">H</span>
<span class="t" style="left:568.50px;top:208.84px;font-size:12px;line-height:12px;color:#333;font-weight:400;-webkit-text-stroke:0.1px currentColor">I</span>
<span class="t" style="left:631.50px;top:208.84px;font-size:12px;line-height:12px;color:#333;font-weight:400;-webkit-text-stroke:0.1px currentColor">J</span>
<span class="t" style="left:694.00px;top:208.84px;font-size:12px;line-height:12px;color:#333;font-weight:400;-webkit-text-stroke:0.1px currentColor">K</span>
<span class="t" style="left:758.50px;top:208.84px;font-size:12px;line-height:12px;color:#333;font-weight:400;-webkit-text-stroke:0.1px currentColor">L</span>
<span class="t" style="left:821.50px;top:208.84px;font-size:12px;line-height:12px;color:#333;font-weight:400;-webkit-text-stroke:0.1px currentColor">M</span>
<span class="t" style="left:9.90px;top:228.84px;font-size:12px;line-height:12px;color:#1d6b40;font-weight:400;-webkit-text-stroke:0.1px currentColor">1</span>
<span class="t" style="left:10.40px;top:248.84px;font-size:12px;line-height:12px;color:#333;font-weight:400;-webkit-text-stroke:0.1px currentColor">2</span>
<span class="t" style="left:10.40px;top:268.84px;font-size:12px;line-height:12px;color:#333;font-weight:400;-webkit-text-stroke:0.1px currentColor">3</span>
<span class="t" style="left:10.40px;top:288.84px;font-size:12px;line-height:12px;color:#333;font-weight:400;-webkit-text-stroke:0.1px currentColor">4</span>
<span class="t" style="left:10.40px;top:308.84px;font-size:12px;line-height:12px;color:#333;font-weight:400;-webkit-text-stroke:0.1px currentColor">5</span>
<span class="t" style="left:10.40px;top:328.84px;font-size:12px;line-height:12px;color:#333;font-weight:400;-webkit-text-stroke:0.1px currentColor">6</span>
<span class="t" style="left:10.40px;top:348.84px;font-size:12px;line-height:12px;color:#333;font-weight:400;-webkit-text-stroke:0.1px currentColor">7</span>
<span class="t" style="left:10.40px;top:368.84px;font-size:12px;line-height:12px;color:#333;font-weight:400;-webkit-text-stroke:0.1px currentColor">8</span>
<span class="t" style="left:10.40px;top:388.84px;font-size:12px;line-height:12px;color:#333;font-weight:400;-webkit-text-stroke:0.1px currentColor">9</span>
<span class="t" style="left:6.90px;top:408.84px;font-size:12px;line-height:12px;color:#333;font-weight:400;-webkit-text-stroke:0.1px currentColor">10</span>
<span class="t" style="left:7.40px;top:428.84px;font-size:12px;line-height:12px;color:#333;font-weight:400;-webkit-text-stroke:0.1px currentColor">11</span>
<span class="t" style="left:6.90px;top:448.84px;font-size:12px;line-height:12px;color:#333;font-weight:400;-webkit-text-stroke:0.1px currentColor">12</span>
<span class="t" style="left:6.90px;top:468.84px;font-size:12px;line-height:12px;color:#333;font-weight:400;-webkit-text-stroke:0.1px currentColor">13</span>
<span class="t" style="left:6.40px;top:488.84px;font-size:12px;line-height:12px;color:#333;font-weight:400;-webkit-text-stroke:0.1px currentColor">14</span>
<span class="t" style="left:6.90px;top:508.84px;font-size:12px;line-height:12px;color:#333;font-weight:400;-webkit-text-stroke:0.1px currentColor">15</span>
<span class="t" style="left:6.90px;top:528.84px;font-size:12px;line-height:12px;color:#333;font-weight:400;-webkit-text-stroke:0.1px currentColor">16</span>
<span class="t" style="left:6.90px;top:548.84px;font-size:12px;line-height:12px;color:#333;font-weight:400;-webkit-text-stroke:0.1px currentColor">17</span>
<span class="t" style="left:6.90px;top:568.84px;font-size:12px;line-height:12px;color:#333;font-weight:400;-webkit-text-stroke:0.1px currentColor">18</span>
<div style="left:27px;top:243px;width:384px;height:1px;background:#000"></div>
<div style="left:27px;top:263px;width:384px;height:1px;background:#000"></div>
<div style="left:27px;top:283px;width:384px;height:1px;background:#000"></div>
<div style="left:27px;top:303px;width:384px;height:1px;background:#000"></div>
<div style="left:27px;top:323px;width:384px;height:1px;background:#000"></div>
<div style="left:27px;top:343px;width:384px;height:1px;background:#000"></div>
<div style="left:27px;top:363px;width:384px;height:1px;background:#000"></div>
<div style="left:27px;top:383px;width:384px;height:1px;background:#000"></div>
<div style="left:90px;top:224px;width:1px;height:160px;background:#000"></div>
<div style="left:154px;top:224px;width:1px;height:160px;background:#000"></div>
<div style="left:218px;top:224px;width:1px;height:160px;background:#000"></div>
<div style="left:282px;top:224px;width:1px;height:160px;background:#000"></div>
<div style="left:346px;top:224px;width:1px;height:160px;background:#000"></div>
<div style="left:410px;top:224px;width:1px;height:160px;background:#000"></div>
<div style="left:218px;top:224px;width:1px;height:19px;background:#fff"></div>
<div style="left:473px;top:222px;width:67px;height:23px;border:2px solid #027340;box-sizing:border-box"></div>
<div style="left:536px;top:241px;width:5px;height:5px;background:#027340;outline:1px solid #fff"></div>
<div style="left:152px;top:218px;width:131px;height:170px;border:3px solid #f00;border-radius:4px;box-sizing:border-box"></div>
<div style="left:853px;top:204px;width:21px;height:369px;background:#e6e6e6"></div>
<div style="left:856px;top:206px;width:15px;height:15px;background:#fff;border:1px solid #ababab;box-sizing:border-box"></div>
<svg style="position:absolute;left:859px;top:210px" width="9" height="6" viewBox="0 0 9 6"><path d="M0.5 5H8.5L4.5 0.8Z" fill="#777"/></svg>
<div style="left:856px;top:221px;width:15px;height:286px;background:#fff;border:1px solid #ababab;box-sizing:border-box"></div>
<div style="left:856px;top:507px;width:15px;height:52px;background:#e1e1e1;background-image:repeating-linear-gradient(45deg,#d6d6d6 0 1px,transparent 1px 3px),repeating-linear-gradient(-45deg,#d6d6d6 0 1px,transparent 1px 3px)"></div>
<div style="left:856px;top:559px;width:15px;height:14px;background:#fff;border:1px solid #ababab;box-sizing:border-box"></div>
<svg style="position:absolute;left:859px;top:564px" width="9" height="6" viewBox="0 0 9 6"><path d="M0.5 0.8H8.5L4.5 5Z" fill="#777"/></svg>
<div style="left:1px;top:573px;width:873px;height:28px;background:#e6e6e6"></div>
<div style="left:1px;top:573px;width:852px;height:1px;background:#ababab"></div>
<svg style="position:absolute;left:27px;top:582px" width="6" height="9" viewBox="0 0 6 9"><path d="M5.5 0.5V8.5L0.8 4.5Z" fill="#bdbdbd"/></svg>
<svg style="position:absolute;left:57px;top:582px" width="6" height="9" viewBox="0 0 6 9"><path d="M0.5 0.5V8.5L5.2 4.5Z" fill="#bdbdbd"/></svg>
<div style="left:101px;top:573px;width:60px;height:25px;background:#fff;border:1px solid #ababab;border-top:none;box-sizing:border-box"></div>
<div style="left:101px;top:596px;width:60px;height:2px;background:#027340"></div>
<span class="t" style="left:113.30px;top:580.84px;font-size:12px;line-height:12px;color:#027340;font-weight:700;transform:scaleX(0.9914);transform-origin:0 0;">Лист1</span>
<svg style="position:absolute;left:193px;top:578px" width="18" height="18" viewBox="0 0 18 18"><circle cx="9" cy="9" r="7.6" fill="none" stroke="#666" stroke-width="1.1"/><path d="M9 5V12.7M5.1 8.9H12.9" stroke="#666" stroke-width="1.8"/></svg>
<div style="left:525px;top:582.5px;width:2px;height:2px;background:#a6a6a6;border-radius:1px"></div>
<div style="left:525px;top:586.5px;width:2px;height:2px;background:#a6a6a6;border-radius:1px"></div>
<div style="left:525px;top:590.5px;width:2px;height:2px;background:#a6a6a6;border-radius:1px"></div>
<div style="left:542px;top:580px;width:311px;height:15px;background:#fff;border:1px solid #ababab;box-sizing:border-box"></div>
<div style="left:543px;top:581px;width:13px;height:13px;background:#fff;border-right:1px solid #ababab;box-sizing:content-box"></div>
<svg style="position:absolute;left:545px;top:583px" width="8" height="9" viewBox="0 0 8 9"><path d="M5.5 0.8V8.2L1 4.5Z" fill="#777"/></svg>
<div style="left:814px;top:581px;width:24px;height:13px;background:#e1e1e1;background-image:repeating-linear-gradient(45deg,#d6d6d6 0 1px,transparent 1px 3px),repeating-linear-gradient(-45deg,#d6d6d6 0 1px,transparent 1px 3px)"></div>
<div style="left:838px;top:580px;width:15px;height:15px;background:#fff;border:1px solid #ababab;box-sizing:border-box"></div>
<svg style="position:absolute;left:842px;top:583px" width="8" height="9" viewBox="0 0 8 9"><path d="M1.5 0.8V8.2L6 4.5Z" fill="#777"/></svg>
<div style="left:1px;top:601px;width:873px;height:22px;background:#f3f3f3"></div>
<div style="left:1px;top:601px;width:873px;height:1px;background:#c6c6c6"></div>
<span class="t" style="left:8.70px;top:605.84px;font-size:12px;line-height:12px;color:#262626;font-weight:400;transform:scaleX(0.9497);transform-origin:0 0;">Создание объекта (автофигура).</span>
<div style="left:560px;top:602px;width:40px;height:21px;background:#c6c6c6"></div>
<svg style="position:absolute;left:572px;top:604px" width="15" height="15" viewBox="0 0 15 15"><rect x="1.5" y="1.5" width="12.5" height="12.5" fill="#d6d6d6" stroke="#6a6a6a" stroke-width="1.2"/><path d="M5.7 1.5V14M9.8 1.5V14M1.5 5.7H14M1.5 9.8H14" stroke="#6a6a6a" stroke-width="1.2"/></svg>
<svg style="position:absolute;left:612px;top:604px" width="16" height="15" viewBox="0 0 16 15"><rect x="1.5" y="1.5" width="13" height="12.5" fill="#fff" stroke="#6a6a6a" stroke-width="1.2"/><rect x="4.5" y="3.5" width="7" height="8.5" fill="#fff" stroke="#6a6a6a" stroke-width="1.1"/><path d="M6.2 6H9.8M6.2 8H9.8M6.2 10H9.8" stroke="#6a6a6a" stroke-width="1"/></svg>
<svg style="position:absolute;left:652px;top:604px" width="16" height="15" viewBox="0 0 16 15"><rect x="1.5" y="1.5" width="13" height="12.5" fill="#fff" stroke="#6a6a6a" stroke-width="1.2"/><path d="M6.3 1.5V8.5M1.5 8.5H9.7V1.5" fill="none" stroke="#6a6a6a" stroke-width="1.1"/></svg>
<div style="left:686px;top:611px;width:8px;height:1.3px;background:#555"></div>
<div style="left:699px;top:611.5px;width:100px;height:1px;background:#a0a0a0"></div>
<div style="left:747px;top:606px;width:5px;height:11px;background:#6a6a6a"></div>
<svg style="position:absolute;left:803px;top:607px" width="9" height="10" viewBox="0 0 9 10"><path d="M4.5 0.5V9.5M0.5 5H8.5" stroke="#555" stroke-width="1.2"/></svg>
<span class="t" style="left:825.12px;top:604.84px;font-size:12px;line-height:12px;color:#262626;font-weight:400;transform:scaleX(0.8788);transform-origin:0 0;">100 %</span>
</body></html>
